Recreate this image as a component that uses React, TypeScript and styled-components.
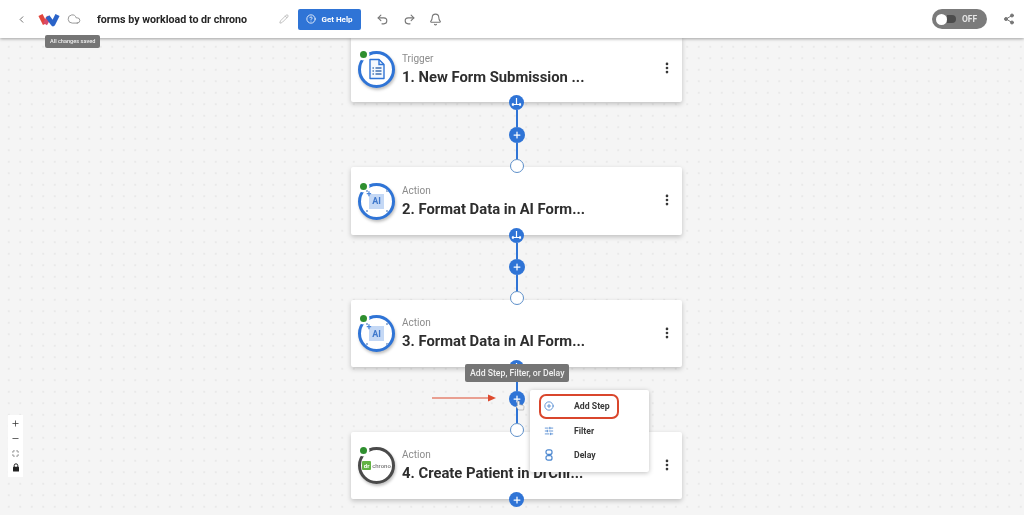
import React from "react";
import styled, { createGlobalStyle } from "styled-components";
import { ChevronLeft, Cloud, Pencil, CircleHelp, Undo2, Redo2, Bell, Share2, Plus, Minus, Maximize, CirclePlus, SlidersHorizontal, EllipsisVertical } from "lucide-react";

const Global = createGlobalStyle`
  html, body { margin: 0; padding: 0; height: 100%; background: #f5f5f5; }
  #root { height: 100%; }
  * { box-sizing: border-box; }
`;

const Page = styled.div`
  position: relative;
  width: 1024px;
  height: 515px;
  overflow: hidden;
  display: flex;
  flex-direction: column;
  font-family: Roboto, "Liberation Sans", sans-serif;
  color: #2b2b2b;
  background: #f5f5f5;
  filter: blur(0.5px);
`;

const Toolbar = styled.header`
  position: relative;
  z-index: 5;
  flex: 0 0 38px;
  display: flex;
  align-items: center;
  padding: 0 9px 0 16px;
  background: #fff;
  box-shadow: 0 1px 3px rgba(0, 0, 0, 0.35);
`;

const IconSlot = styled.span<{ $color?: string; $ml?: number }>`
  display: inline-flex;
  color: ${(p) => p.$color || "#777"};
  margin-left: ${(p) => p.$ml || 0}px;
`;

const Kebab = styled(IconSlot)`
  margin-bottom: 2px;
`;

const LogoMark = styled.svg`
  margin-left: 11px;
`;

const DocTitle = styled.div`
  margin-left: 16px;
  width: 182px;
  font-size: 10.7px;
  font-weight: 700;
  color: #262626;
  white-space: nowrap;
`;

const HelpButton = styled.button`
  display: flex;
  align-items: center;
  justify-content: center;
  gap: 5px;
  width: 63px;
  height: 21px;
  margin-left: 9px;
  padding: 0;
  border: 0;
  border-radius: 2px;
  background: #2f74d6;
  color: #fff;
  font-family: inherit;
  font-size: 8px;
  font-weight: 700;
`;

const Spacer = styled.div`
  flex: 1;
`;

const Toggle = styled.div`
  display: flex;
  align-items: center;
  width: 55px;
  height: 20px;
  padding-left: 4px;
  border-radius: 10px;
  background: #7b7b7b;
  color: #e6e6e6;
  font-size: 8.5px;
  font-weight: 700;
`;

const ToggleKnob = styled.span`
  width: 11px;
  height: 11px;
  border-radius: 50%;
  background: #fff;
`;

const ToggleTrack = styled.span`
  width: 9px;
  height: 8px;
  margin-right: 6px;
  border-radius: 0 4px 4px 0;
  background: #4c4c4c;
`;

const Canvas = styled.main`
  position: relative;
  flex: 1;
  overflow: hidden;
  display: flex;
  flex-direction: column;
  align-items: center;
  padding-left: 9px;
  background-color: #f5f5f5;
  background-image: radial-gradient(#e9e9e9 0.8px, transparent 1px);
  background-size: 11.5px 11.5px;
  background-position: 3px 3px;
`;

const Card = styled.section<{ $height: number }>`
  flex: 0 0 ${(p) => p.$height}px;
  width: 331px;
  display: flex;
  align-items: center;
  padding: 0 8px 0 7px;
  background: #fff;
  border-radius: 2px;
  box-shadow: 0 2px 5px rgba(0, 0, 0, 0.22);

  &:first-child {
    margin-top: -2px;
  }
`;

const Badge = styled.div<{ $color: string }>`
  position: relative;
  flex: 0 0 37px;
  height: 37px;
  display: flex;
  align-items: center;
  justify-content: center;
  border-radius: 50%;
  border: 3px solid ${(p) => p.$color};
  box-shadow: 1px 2px 3px rgba(0, 0, 0, 0.25);
  background: #fff;
`;

const StatusDot = styled.span`
  position: absolute;
  top: -3px;
  left: -1px;
  width: 7px;
  height: 7px;
  border-radius: 50%;
  background: #2f8f2f;
  box-shadow: 0 0 0 2.5px #fff;
`;

const CardText = styled.div`
  flex: 1;
  margin-left: 7px;
  min-width: 0;
`;

const Kind = styled.div`
  font-size: 10px;
  line-height: 12px;
  color: #8b8b8b;
`;

const StepName = styled.div`
  margin-top: 3px;
  font-size: 14.8px;
  line-height: 18px;
  font-weight: 700;
  color: #2e2e2e;
  white-space: nowrap;
`;

const Connector = styled.div<{ $overlap: number }>`
  position: relative;
  z-index: 2;
  flex: 0 0 ${(p) => 72 + p.$overlap}px;
  margin: -7px 0 ${(p) => -p.$overlap}px;
  display: flex;
  flex-direction: column;
  align-items: center;
`;

const Line = styled.span`
  flex: 1;
  width: 2px;
  background: #2f74d6;
`;

const Dot = styled.span<{ $size: number }>`
  flex: 0 0 ${(p) => p.$size}px;
  width: ${(p) => p.$size}px;
  display: flex;
  align-items: center;
  justify-content: center;
  border-radius: 50%;
  background: #2f74d6;
  color: #fff;
`;

const Hollow = styled.span`
  flex: 0 0 14px;
  width: 14px;
  border-radius: 50%;
  background: #fff;
  border: 1.2px solid #5d8fc9;
`;

const EndDot = styled(Dot)`
  position: relative;
  z-index: 2;
  margin-top: -7px;
`;

const Hint = styled.div<{ $x: number; $y: number }>`
  position: absolute;
  left: ${(p) => p.$x}px;
  top: ${(p) => p.$y}px;
  z-index: 6;
  padding: 0 5px;
  border-radius: 2px;
  background: #757575;
  color: #f0f0f0;
  font-weight: 500;
  white-space: nowrap;
`;

const SavedHint = styled(Hint)`
  height: 13px;
  line-height: 13px;
  font-size: 5.6px;
`;

const StepHint = styled(Hint)`
  height: 18px;
  line-height: 18px;
  font-size: 8.7px;
`;

const Arrow = styled.svg`
  position: absolute;
  left: 432px;
  top: 393px;
  z-index: 3;
`;

const Cursor = styled.svg`
  position: absolute;
  left: 515px;
  top: 399px;
  z-index: 4;
`;

const Menu = styled.nav`
  position: absolute;
  left: 530px;
  top: 390px;
  z-index: 4;
  width: 119px;
  height: 82px;
  display: flex;
  flex-direction: column;
  padding: 4px 8px;
  background: #fff;
  border-radius: 2px;
  box-shadow: 0 1px 5px rgba(0, 0, 0, 0.25);
`;

const MenuItem = styled.div<{ $active?: boolean }>`
  flex: 0 0 24.5px;
  display: flex;
  align-items: center;
  width: 80px;
  margin-left: 1px;
  padding-left: 3px;
  border-radius: 7px;
  border: 2px solid ${(p) => (p.$active ? "#d9462c" : "transparent")};
  color: #3a3a3a;
  font-size: 8.7px;
  font-weight: 700;
`;

const MenuLabel = styled.span`
  margin-left: 20px;
`;

const ZoomPanel = styled.aside`
  position: absolute;
  left: 8px;
  top: 415px;
  z-index: 3;
  width: 15px;
  height: 62px;
  display: flex;
  flex-direction: column;
  align-items: center;
  justify-content: space-around;
  padding: 1px 0 2px;
  background: #fff;
  color: #333;
`;

function FormIcon() {
  return (
    <svg width="18" height="22" viewBox="0 0 18 22" fill="none">
      <path d="M2 1.5h9l5 5v14H2z" fill="#f4f8fe" stroke="#2f74d6" strokeWidth="1.4" strokeLinejoin="round" />
      <path d="M11 1.5v5h5" stroke="#2f74d6" strokeWidth="1.4" />
      <path d="M7.5 10h6M7.5 13h6M7.5 16h6" stroke="#3f6fb0" strokeWidth="1.3" />
      <path d="M4.5 10h1.4M4.5 13h1.4M4.5 16h1.4" stroke="#3f6fb0" strokeWidth="1.3" />
    </svg>
  );
}

function HourglassIcon() {
  return (
    <svg width="10" height="12" viewBox="0 0 10 12" fill="none" stroke="currentColor" strokeWidth="1.2">
      <rect x="2" y="0.8" width="6" height="4.6" rx="2" />
      <rect x="2" y="6.6" width="6" height="4.6" rx="2" />
    </svg>
  );
}

function LockIcon() {
  return (
    <svg width="8" height="9" viewBox="0 0 8 9">
      <path d="M2.2 4V2.6a1.8 1.8 0 0 1 3.6 0V4" fill="none" stroke="#222" strokeWidth="1" />
      <rect x="1" y="3.8" width="6" height="4.8" rx="0.6" fill="#222" />
    </svg>
  );
}

const AiFrame = styled.div`
  position: relative;
  width: 24px;
  height: 24px;
  display: flex;
  align-items: center;
  justify-content: center;
  background-image:
    radial-gradient(circle at 2px 2px, #9bb4d8 1px, transparent 1.4px),
    radial-gradient(circle at 22px 2px, #9bb4d8 1px, transparent 1.4px),
    radial-gradient(circle at 2px 22px, #9bb4d8 1px, transparent 1.4px),
    radial-gradient(circle at 22px 22px, #9bb4d8 1px, transparent 1.4px);
`;

const AiSquare = styled.div`
  width: 15px;
  height: 15px;
  display: flex;
  align-items: center;
  justify-content: center;
  background: #c4d8f5;
  color: #3f78cc;
  font-size: 9px;
  font-weight: 700;
`;

const Sparkle = styled.span`
  position: absolute;
  left: 2px;
  top: 1px;
  color: #4a86dc;
  font-size: 9px;
  line-height: 9px;
  font-weight: 700;
`;

const ChronoLogo = styled.div`
  display: flex;
  align-items: center;
  gap: 1px;
  color: #777;
  font-size: 6px;
  font-weight: 500;
`;

const ChronoMark = styled.span`
  width: 9px;
  height: 9px;
  display: flex;
  align-items: center;
  justify-content: center;
  border-radius: 1px;
  background: #62b244;
  color: #fff;
  font-size: 6px;
  font-weight: 700;
`;

function Logo() {
  return (
    <LogoMark width="22" height="15" viewBox="0 0 22 15" fill="none" strokeWidth="4.6" strokeLinejoin="round">
      <path d="M2.5 3L7 12" stroke="#e2453c" />
      <path d="M7 12L11 5" stroke="#d84a6a" />
      <path d="M9.5 4.5L15 12L19.5 3" stroke="#2a63c8" />
    </LogoMark>
  );
}

function AiIcon() {
  return (
    <AiFrame>
      <Sparkle>+</Sparkle>
      <AiSquare>AI</AiSquare>
    </AiFrame>
  );
}

interface IStep {
  kind: string;
  name: string;
  ring: string;
  height: number;
  icon: React.ReactNode;
}

const steps: IStep[] = [
  { kind: "Trigger", name: "1. New Form Submission ...", ring: "#2f74d6", height: 66, icon: <FormIcon /> },
  { kind: "Action", name: "2. Format Data in AI Form...", ring: "#2f74d6", height: 68, icon: <AiIcon /> },
  { kind: "Action", name: "3. Format Data in AI Form...", ring: "#2f74d6", height: 67, icon: <AiIcon /> },
  { kind: "Action", name: "4. Create Patient in DrChr...", ring: "#4a4a4a", height: 67, icon: <ChronoLogo><ChronoMark>dr</ChronoMark>chrono</ChronoLogo> },
];

function Link({ overlap }: { overlap: number }) {
  return (
    <Connector $overlap={overlap}>
      <Dot $size={15}>
        <svg width="11" height="11" viewBox="0 0 11 11" fill="none" stroke="#fff" strokeWidth="1.2">
          <path d="M5.5 1v6M1 7.5h9M1 7.5l1.5-1.4M1 7.5l1.5 1.4M10 7.5l-1.5-1.4M10 7.5l-1.5 1.4" />
        </svg>
      </Dot>
      <Line />
      <Dot $size={16}><Plus size={10} strokeWidth={3} /></Dot>
      <Line />
      <Hollow />
    </Connector>
  );
}

export default function App() {
  return (
    <Page>
      <Global />
      <Toolbar>
        <IconSlot $color="#666"><ChevronLeft size={11} /></IconSlot>
        <Logo />
        <IconSlot $color="#8a8a8a" $ml={7}><Cloud size={14} strokeWidth={1.5} /></IconSlot>
        <DocTitle>forms by workload to dr chrono</DocTitle>
        <IconSlot $color="#b5b5b5"><Pencil size={10} /></IconSlot>
        <HelpButton><CircleHelp size={10} />Get Help</HelpButton>
        <IconSlot $color="#777" $ml={15}><Undo2 size={13} /></IconSlot>
        <IconSlot $color="#777" $ml={14}><Redo2 size={13} /></IconSlot>
        <IconSlot $color="#777" $ml={13}><Bell size={13} /></IconSlot>
        <Spacer />
        <Toggle>
          <ToggleKnob />
          <ToggleTrack />
          OFF
        </Toggle>
        <IconSlot $color="#777" $ml={16}><Share2 size={12} fill="currentColor" /></IconSlot>
      </Toolbar>
      <SavedHint $x={45} $y={35}>All changes saved</SavedHint>
      <Canvas>
        {steps.map((step, i) => (
          <React.Fragment key={step.name}>
            <Card $height={step.height}>
              <Badge $color={step.ring}>
                <StatusDot />
                {step.icon}
              </Badge>
              <CardText>
                <Kind>{step.kind}</Kind>
                <StepName>{step.name}</StepName>
              </CardText>
              <Kebab $color="#333"><EllipsisVertical size={14} strokeWidth={2.6} /></Kebab>
            </Card>
            {i < steps.length - 1 ? <Link overlap={i === 0 ? 6 : 5} /> : <EndDot $size={15}><Plus size={10} strokeWidth={3} /></EndDot>}
          </React.Fragment>
        ))}
      </Canvas>
      <StepHint $x={465} $y={364}>Add Step, Filter, or Delay</StepHint>
      <Arrow width="64" height="10" viewBox="0 0 64 10">
        <path d="M0 5h57" stroke="#dd4a2e" strokeWidth="1.2" />
        <path d="M56 1.5L64 5l-8 3.5z" fill="#dd4a2e" />
      </Arrow>
      <Cursor width="10" height="12" viewBox="0 0 11 12">
        <path d="M2.5 3c0-2 2.5-2 2.5 0v2.5l3.5.8c1.2.3 1.5 1 1.4 2L9.5 11.5H4L1 7.5l1.5-.5z" fill="#f2f2f2" stroke="#999" strokeWidth=".6" />
      </Cursor>
      <Menu>
        <MenuItem $active>
          <IconSlot $color="#4a86cf"><CirclePlus size={10} /></IconSlot>
          <MenuLabel>Add Step</MenuLabel>
        </MenuItem>
        <MenuItem>
          <IconSlot $color="#4a86cf"><SlidersHorizontal size={10} /></IconSlot>
          <MenuLabel>Filter</MenuLabel>
        </MenuItem>
        <MenuItem>
          <IconSlot $color="#4a86cf"><HourglassIcon /></IconSlot>
          <MenuLabel>Delay</MenuLabel>
        </MenuItem>
      </Menu>
      <ZoomPanel>
        <Plus size={9} strokeWidth={2} />
        <Minus size={9} strokeWidth={2} />
        <Maximize size={7} strokeWidth={2} />
        <LockIcon />
      </ZoomPanel>
    </Page>
  );
}
